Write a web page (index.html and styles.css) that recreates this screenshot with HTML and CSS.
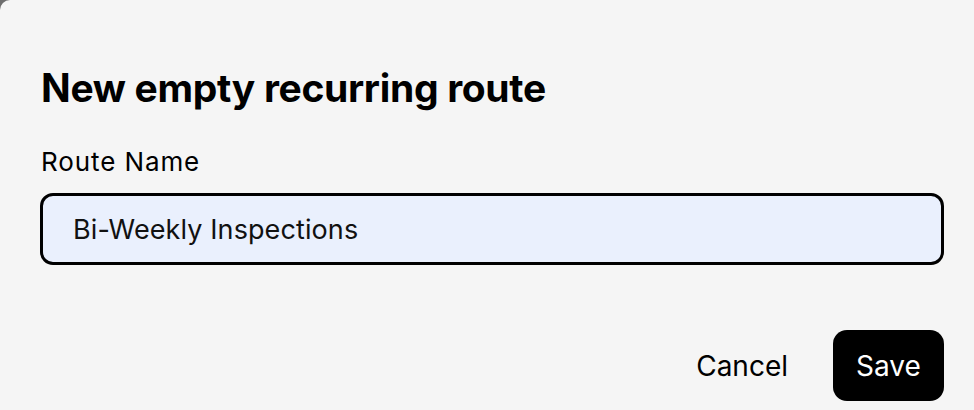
FILE: index.html
```html
<!DOCTYPE html>
<html>
<head>
<meta charset="utf-8">
<link rel="stylesheet" href="styles.css">
</head>
<body>
<div class="modal">
  <h1 class="title">New empty recurring route</h1>
  <label class="label" for="route-name">Route Name</label>
  <div class="input-box"><input id="route-name" class="input" type="text" value="Bi-Weekly Inspections"></div>
  <div class="actions">
    <button class="btn-cancel">Cancel</button>
    <button class="btn-save">Save</button>
  </div>
</div>
</body>
</html>
```
FILE: styles.css
```css
html, body {
  margin: 0;
  padding: 0;
  background: #6e6e6e;
  height: 100%;
}
.modal {
  box-sizing: border-box;
  height: 410px;
  background: #f5f5f5;
  border-top-left-radius: 10px;
  padding: 64px 30px 0 40px;
  font-family: Inter, "Noto Sans", sans-serif;
  color: #000;
  display: flex;
  flex-direction: column;
}
.title {
  margin: 0 0 0 1px;
  font-size: 39px;
  font-weight: 700;
  line-height: 48px;
  letter-spacing: -0.32px;
}
.label {
  margin: 34px 0 0 1px;
  font-size: 26px;
  line-height: 32px;
  font-weight: 400;
  letter-spacing: 0.9px;
}
.input-box {
  margin-top: 15px;
}
.input {
  display: block;
  box-sizing: border-box;
  width: 100%;
  height: 72px;
  border: 3px solid #000;
  border-radius: 13px;
  background: #eaf0fd;
  padding: 0 0 0 30px;
  font-family: Inter, "Noto Sans", sans-serif;
  font-size: 27px;
  letter-spacing: 0.1px;
  color: #111;
  outline: none;
}
.actions {
  margin-top: 65px;
  display: flex;
  justify-content: flex-end;
  align-items: center;
  gap: 45px;
}
.btn-cancel {
  background: none;
  border: none;
  padding: 0;
  font-family: Inter, "Noto Sans", sans-serif;
  font-size: 28px;
  color: #000;
}
.btn-save {
  width: 111px;
  height: 71px;
  border: none;
  border-radius: 14px;
  background: #000;
  color: #fff;
  font-family: Inter, "Noto Sans", sans-serif;
  font-size: 28px;
  padding: 0;
}
```
